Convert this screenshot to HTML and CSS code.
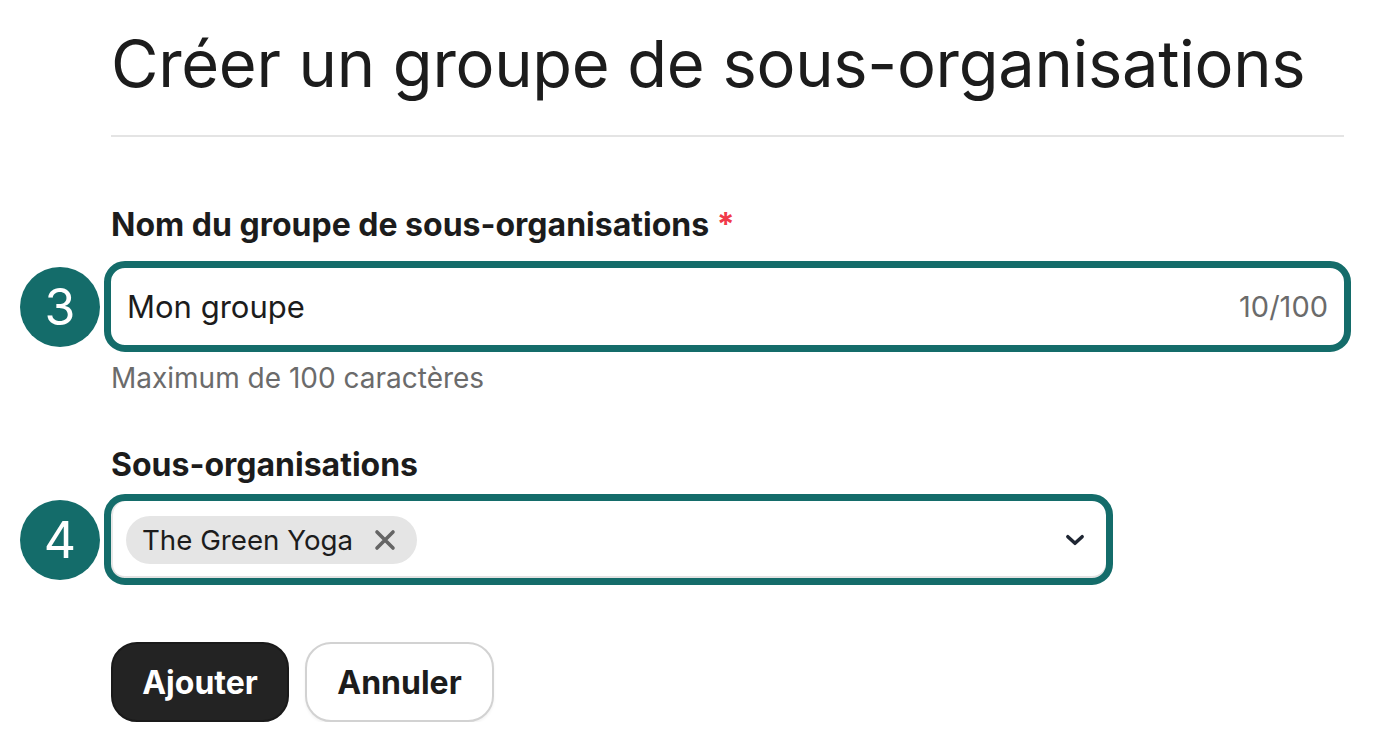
FILE: index.html
```html
<!DOCTYPE html>
<html lang="fr">
<head>
<meta charset="utf-8">
<title>Créer un groupe de sous-organisations</title>
<link rel="stylesheet" href="styles.css">
</head>
<body>
<main class="page">
  <h1 class="title">Créer un groupe de sous-organisations</h1>
  <hr class="divider">

  <form class="form">
    <div class="field field-name">
      <label class="label">Nom du groupe de sous-organisations <span class="req">*</span></label>
      <div class="control">
        <span class="step">3</span>
        <div class="input ring">
          <span class="value">Mon groupe</span>
          <span class="count">10/100</span>
        </div>
      </div>
      <p class="help">Maximum de 100 caractères</p>
    </div>

    <div class="field field-select">
      <label class="label">Sous-organisations</label>
      <div class="control">
        <span class="step">4</span>
        <div class="select ring">
          <span class="chip">The Green Yoga
            <svg class="chip-x" viewBox="0 0 22 22" width="22" height="22"><path d="M3 3L19 19M19 3L3 19" stroke="#656565" stroke-width="3.6" stroke-linecap="round" fill="none"/></svg>
          </span>
          <svg class="chevron" viewBox="0 0 20 20" width="20" height="20"><path d="M3.5 7L10 13L16.5 7" stroke="#1f2633" stroke-width="3.2" stroke-linecap="round" stroke-linejoin="round" fill="none"/></svg>
        </div>
      </div>
    </div>

    <div class="actions">
      <button type="button" class="btn btn-primary">Ajouter</button>
      <button type="button" class="btn btn-secondary">Annuler</button>
    </div>
  </form>
</main>
</body>
</html>
```

FILE: styles.css
```css
* { box-sizing: border-box; }

html, body {
  margin: 0;
  background: #ffffff;
}

body {
  font-family: Inter, "Noto Sans", "Liberation Sans", sans-serif;
  color: #1c1c1c;
}

.page {
  padding: 25px 32px 0 111px;
}

.title {
  margin: 0;
  font-size: 65px;
  font-weight: 400;
  line-height: 78px;
  letter-spacing: -0.3px;
  color: #1c1c1c;
}

.divider {
  margin: 32px 0 0;
  border: 0;
  height: 2px;
  background: #e4e4e4;
}

.form {
  display: flex;
  flex-direction: column;
}

.field-name {
  margin-top: 69px;
}

.field-select {
  margin-top: 51px;
}

.label {
  display: block;
  font-size: 32px;
  font-weight: 700;
  line-height: 38px;
  color: #1c1c1c;
}

.req {
  color: #f03a4a;
}

.control {
  position: relative;
}

.field-name .control {
  margin-top: 24px;
}

.field-select .control {
  margin-top: 17px;
}

.step {
  position: absolute;
  left: -91px;
  top: 50%;
  width: 80px;
  height: 80px;
  margin-top: -40px;
  border-radius: 50%;
  background: #146c6a;
  color: #ffffff;
  font-size: 50px;
  font-weight: 400;
  line-height: 80px;
  text-align: center;
}

.ring {
  outline: 7px solid #146c6a;
  outline-offset: 0;
}

.input {
  display: flex;
  align-items: center;
  justify-content: space-between;
  height: 77px;
  padding: 0 16px;
  border-radius: 14px;
  background: #ffffff;
}

.value {
  font-size: 31px;
  color: #1c1c1c;
}

.count {
  font-size: 29px;
  color: #6b6b6b;
}

.help {
  margin: 16px 0 0;
  font-size: 28px;
  line-height: 34px;
  color: #6b6b6b;
}

.select {
  display: flex;
  align-items: center;
  justify-content: space-between;
  width: 995px;
  height: 77px;
  padding: 0 20px 0 15px;
  border-radius: 14px;
  background: #ffffff;
  box-shadow: inset 0 -2px 0 #e2e2e2, inset 2px 0 0 #e8e8e8;
}

.chip {
  display: inline-flex;
  align-items: center;
  gap: 21px;
  height: 48px;
  padding: 0 21px 0 16px;
  border-radius: 24px;
  background: #e5e5e5;
  font-size: 27.7px;
  color: #1c1c1c;
}

.chip-x {
  width: 22px;
  height: 22px;
}

.chevron {
  width: 22px;
  height: 22px;
}

.actions {
  display: flex;
  gap: 16px;
  margin-top: 64px;
}

.btn {
  height: 80px;
  border-radius: 26px;
  font-family: Inter, "Noto Sans", "Liberation Sans", sans-serif;
  font-size: 32px;
  font-weight: 700;
  padding: 0;
  cursor: pointer;
}

.btn-primary {
  width: 178px;
  background: #232323;
  color: #ffffff;
  border: 2px solid #1a1a1a;
}

.btn-secondary {
  width: 189px;
  background: #ffffff;
  color: #1c1c1c;
  border: 2px solid #d2d2d2;
  box-shadow: 0 2px 3px rgba(0,0,0,0.05);
}
```
